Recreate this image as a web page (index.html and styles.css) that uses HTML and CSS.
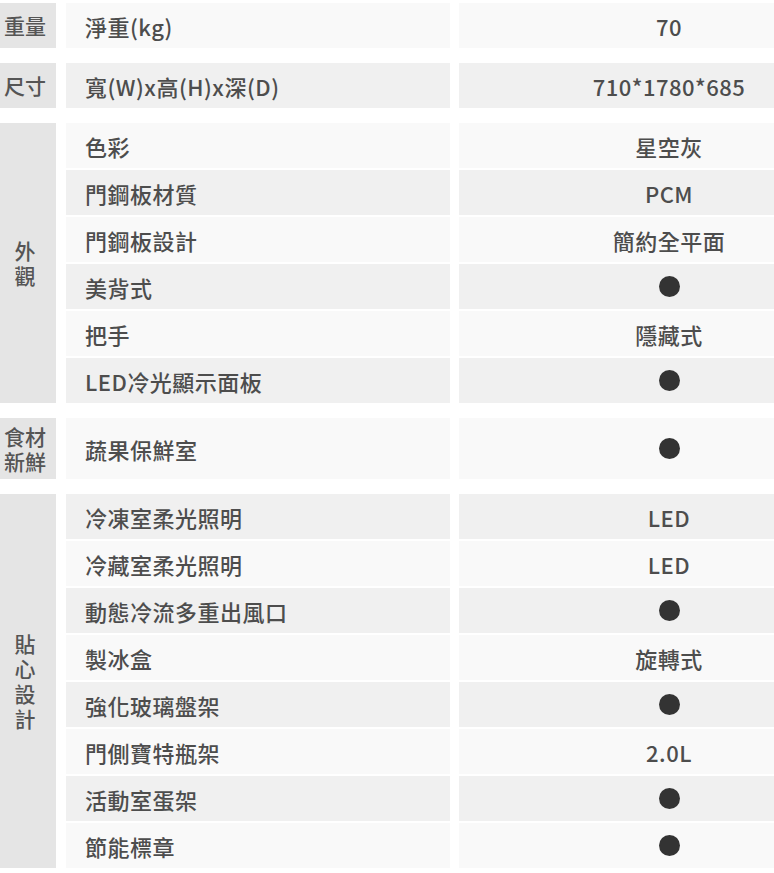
FILE: index.html
```html
<!DOCTYPE html>
<html lang="zh-Hant">
<head>
<meta charset="utf-8">
<title>規格表</title>
<link rel="stylesheet" href="styles.css">
</head>
<body>
<div class="spec">
  <section class="group">
    <div class="cat">重量</div>
    <div class="rows">
      <div class="row light"><div class="name">淨重(kg)</div><div class="val">70</div></div>
    </div>
  </section>
  <section class="group">
    <div class="cat">尺寸</div>
    <div class="rows">
      <div class="row grey"><div class="name">寬(W)x高(H)x深(D)</div><div class="val">710*1780*685</div></div>
    </div>
  </section>
  <section class="group">
    <div class="cat stack">外<br>觀</div>
    <div class="rows">
      <div class="row light"><div class="name">色彩</div><div class="val">星空灰</div></div>
      <div class="row grey"><div class="name">門鋼板材質</div><div class="val">PCM</div></div>
      <div class="row light"><div class="name">門鋼板設計</div><div class="val">簡約全平面</div></div>
      <div class="row grey"><div class="name">美背式</div><div class="val"><span class="dot"></span></div></div>
      <div class="row light"><div class="name">把手</div><div class="val">隱藏式</div></div>
      <div class="row grey"><div class="name">LED冷光顯示面板</div><div class="val"><span class="dot"></span></div></div>
    </div>
  </section>
  <section class="group">
    <div class="cat">食材<br>新鮮</div>
    <div class="rows">
      <div class="row light tall"><div class="name">蔬果保鮮室</div><div class="val"><span class="dot"></span></div></div>
    </div>
  </section>
  <section class="group">
    <div class="cat stack">貼<br>心<br>設<br>計</div>
    <div class="rows">
      <div class="row grey"><div class="name">冷凍室柔光照明</div><div class="val">LED</div></div>
      <div class="row light"><div class="name">冷藏室柔光照明</div><div class="val">LED</div></div>
      <div class="row grey"><div class="name">動態冷流多重出風口</div><div class="val"><span class="dot"></span></div></div>
      <div class="row light"><div class="name">製冰盒</div><div class="val">旋轉式</div></div>
      <div class="row grey"><div class="name">強化玻璃盤架</div><div class="val"><span class="dot"></span></div></div>
      <div class="row light"><div class="name">門側寶特瓶架</div><div class="val">2.0L</div></div>
      <div class="row grey"><div class="name">活動室蛋架</div><div class="val"><span class="dot"></span></div></div>
      <div class="row light"><div class="name">節能標章</div><div class="val"><span class="dot"></span></div></div>
    </div>
  </section>
</div>
</body>
</html>
```
FILE: styles.css
```css
html, body {
  margin: 0;
  padding: 0;
  background: #ffffff;
  overflow: hidden;
}
body {
  font-family: "Noto Sans CJK TC", "Noto Sans", sans-serif;
  color: #4d4d4d;
}
.spec {
  width: 879px;
  padding-top: 3px;
  display: flex;
  flex-direction: column;
  gap: 15px;
}
.group {
  display: grid;
  grid-template-columns: 56px 1fr;
  column-gap: 10px;
}
.cat {
  background: #e5e5e5;
  display: flex;
  align-items: center;
  justify-content: center;
  padding-right: 6px;
  text-align: center;
  font-size: 21px;
  line-height: 25px;
  font-weight: 500;
  color: #555;
}
.rows {
  display: flex;
  flex-direction: column;
  gap: 2px;
}
.row {
  display: grid;
  grid-template-columns: 384px 420px;
  column-gap: 9px;
  height: 45px;
  font-size: 22px;
  font-weight: 500;
}
.row.tall {
  height: 61px;
}
.name, .val {
  display: flex;
  align-items: center;
  letter-spacing: 0.5px;
}
.name {
  padding-left: 19px;
}
.val {
  justify-content: center;
}
.light .name, .light .val { background: #f9f9f9; }
.grey .name, .grey .val { background: #f0f0f0; }
.dot {
  width: 21px;
  height: 21px;
  border-radius: 50%;
  background: #333;
}
```
